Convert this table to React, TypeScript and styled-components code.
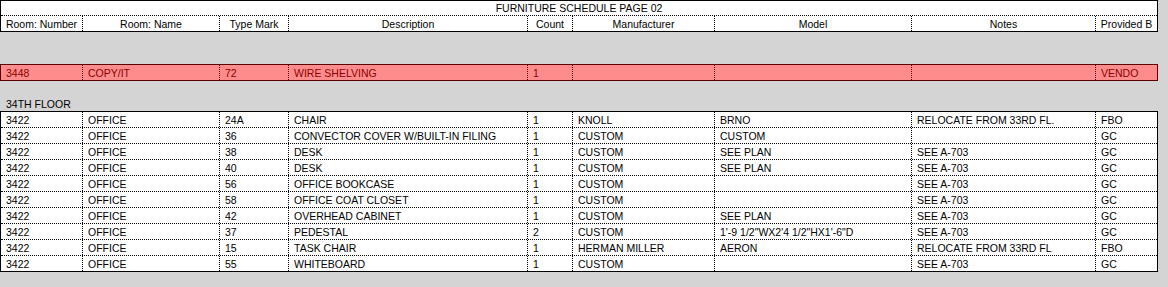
import React from "react";
import styled, { createGlobalStyle } from "styled-components";

const Global = createGlobalStyle`
  html, body { margin: 0; padding: 0; background: #d4d4d4; }
  body { font-family: "Liberation Sans", Arial, sans-serif; font-size: 10.5px; color: #000; }
`;

const COLS = "82px 137px 69px 239px 45px 142px 197px 184px 61px";

const Page = styled.div`
  width: 1168px;
  height: 287px;
  background: #d4d4d4;
  overflow: hidden;
`;

const HeaderBox = styled.div`
  width: 1156px;
  background: #fff;
  border: 1px solid #000;
`;

const Title = styled.div`
  height: 14px;
  line-height: 15px;
  text-align: center;
  border-bottom: 1px dotted #000;
`;

const Row = styled.div<{ $last?: boolean; $tone?: "red" | "white" }>`
  display: grid;
  grid-template-columns: ${COLS};
  height: 15px;
  line-height: 16px;
  border-bottom: ${(p) =>
    p.$last ? "none" : `1px dotted ${p.$tone === "red" ? "#5a0000" : "#000"}`};
`;

const Cell = styled.div<{ $center?: boolean; $tone?: "red" | "white"; $end?: boolean }>`
  padding-left: ${(p) => (p.$center ? "0" : "5px")};
  text-align: ${(p) => (p.$center ? "center" : "left")};
  white-space: nowrap;
  overflow: hidden;
  border-right: ${(p) =>
    p.$end ? "none" : `1px dotted ${p.$tone === "red" ? "#5a0000" : "#000"}`};
`;

const Spacer = styled.div<{ $h: number }>`
  height: ${(p) => p.$h}px;
`;

const RedBox = styled.div`
  width: 1156px;
  background: #ff8c8c;
  color: #8a0000;
  border: 1px solid #5a0000;
`;

const GroupLabel = styled.div`
  height: 15px;
  line-height: 16px;
  padding-left: 6px;
`;

const DataBox = styled.div`
  width: 1156px;
  background: #fff;
  border: 1px solid #000;
`;

const headers = [
  "Room: Number",
  "Room: Name",
  "Type Mark",
  "Description",
  "Count",
  "Manufacturer",
  "Model",
  "Notes",
  "Provided B",
];

const rows: string[][] = [
  ["3422", "OFFICE", "24A", "CHAIR", "1", "KNOLL", "BRNO", "RELOCATE FROM 33RD FL.", "FBO"],
  ["3422", "OFFICE", "36", "CONVECTOR COVER W/BUILT-IN FILING", "1", "CUSTOM", "CUSTOM", "", "GC"],
  ["3422", "OFFICE", "38", "DESK", "1", "CUSTOM", "SEE PLAN", "SEE A-703", "GC"],
  ["3422", "OFFICE", "40", "DESK", "1", "CUSTOM", "SEE PLAN", "SEE A-703", "GC"],
  ["3422", "OFFICE", "56", "OFFICE BOOKCASE", "1", "CUSTOM", "", "SEE A-703", "GC"],
  ["3422", "OFFICE", "58", "OFFICE COAT CLOSET", "1", "CUSTOM", "", "SEE A-703", "GC"],
  ["3422", "OFFICE", "42", "OVERHEAD CABINET", "1", "CUSTOM", "SEE PLAN", "SEE A-703", "GC"],
  ["3422", "OFFICE", "37", "PEDESTAL", "2", "CUSTOM", "1'-9 1/2\"WX2'4 1/2\"HX1'-6\"D", "SEE A-703", "GC"],
  ["3422", "OFFICE", "15", "TASK CHAIR", "1", "HERMAN MILLER", "AERON", "RELOCATE FROM 33RD FL", "FBO"],
  ["3422", "OFFICE", "55", "WHITEBOARD", "1", "CUSTOM", "", "SEE A-703", "GC"],
];

const redRow = ["3448", "COPY/IT", "72", "WIRE SHELVING", "1", "", "", "", "VENDO"];

export default function App() {
  return (
    <Page>
      <Global />
      <HeaderBox>
        <Title>FURNITURE SCHEDULE PAGE 02</Title>
        <Row $last>
          {headers.map((h, i) => (
            <Cell key={h} $center $end={i === headers.length - 1}>
              {h}
            </Cell>
          ))}
        </Row>
      </HeaderBox>
      <Spacer $h={32} />
      <RedBox>
        <Row $last $tone="red">
          {redRow.map((v, i) => (
            <Cell key={i} $tone="red" $end={i === redRow.length - 1}>
              {v}
            </Cell>
          ))}
        </Row>
      </RedBox>
      <Spacer $h={15} />
      <GroupLabel>34TH FLOOR</GroupLabel>
      <DataBox>
        {rows.map((r, ri) => (
          <Row key={ri} $last={ri === rows.length - 1}>
            {r.map((v, i) => (
              <Cell key={i} $end={i === r.length - 1}>
                {v}
              </Cell>
            ))}
          </Row>
        ))}
      </DataBox>
    </Page>
  );
}
